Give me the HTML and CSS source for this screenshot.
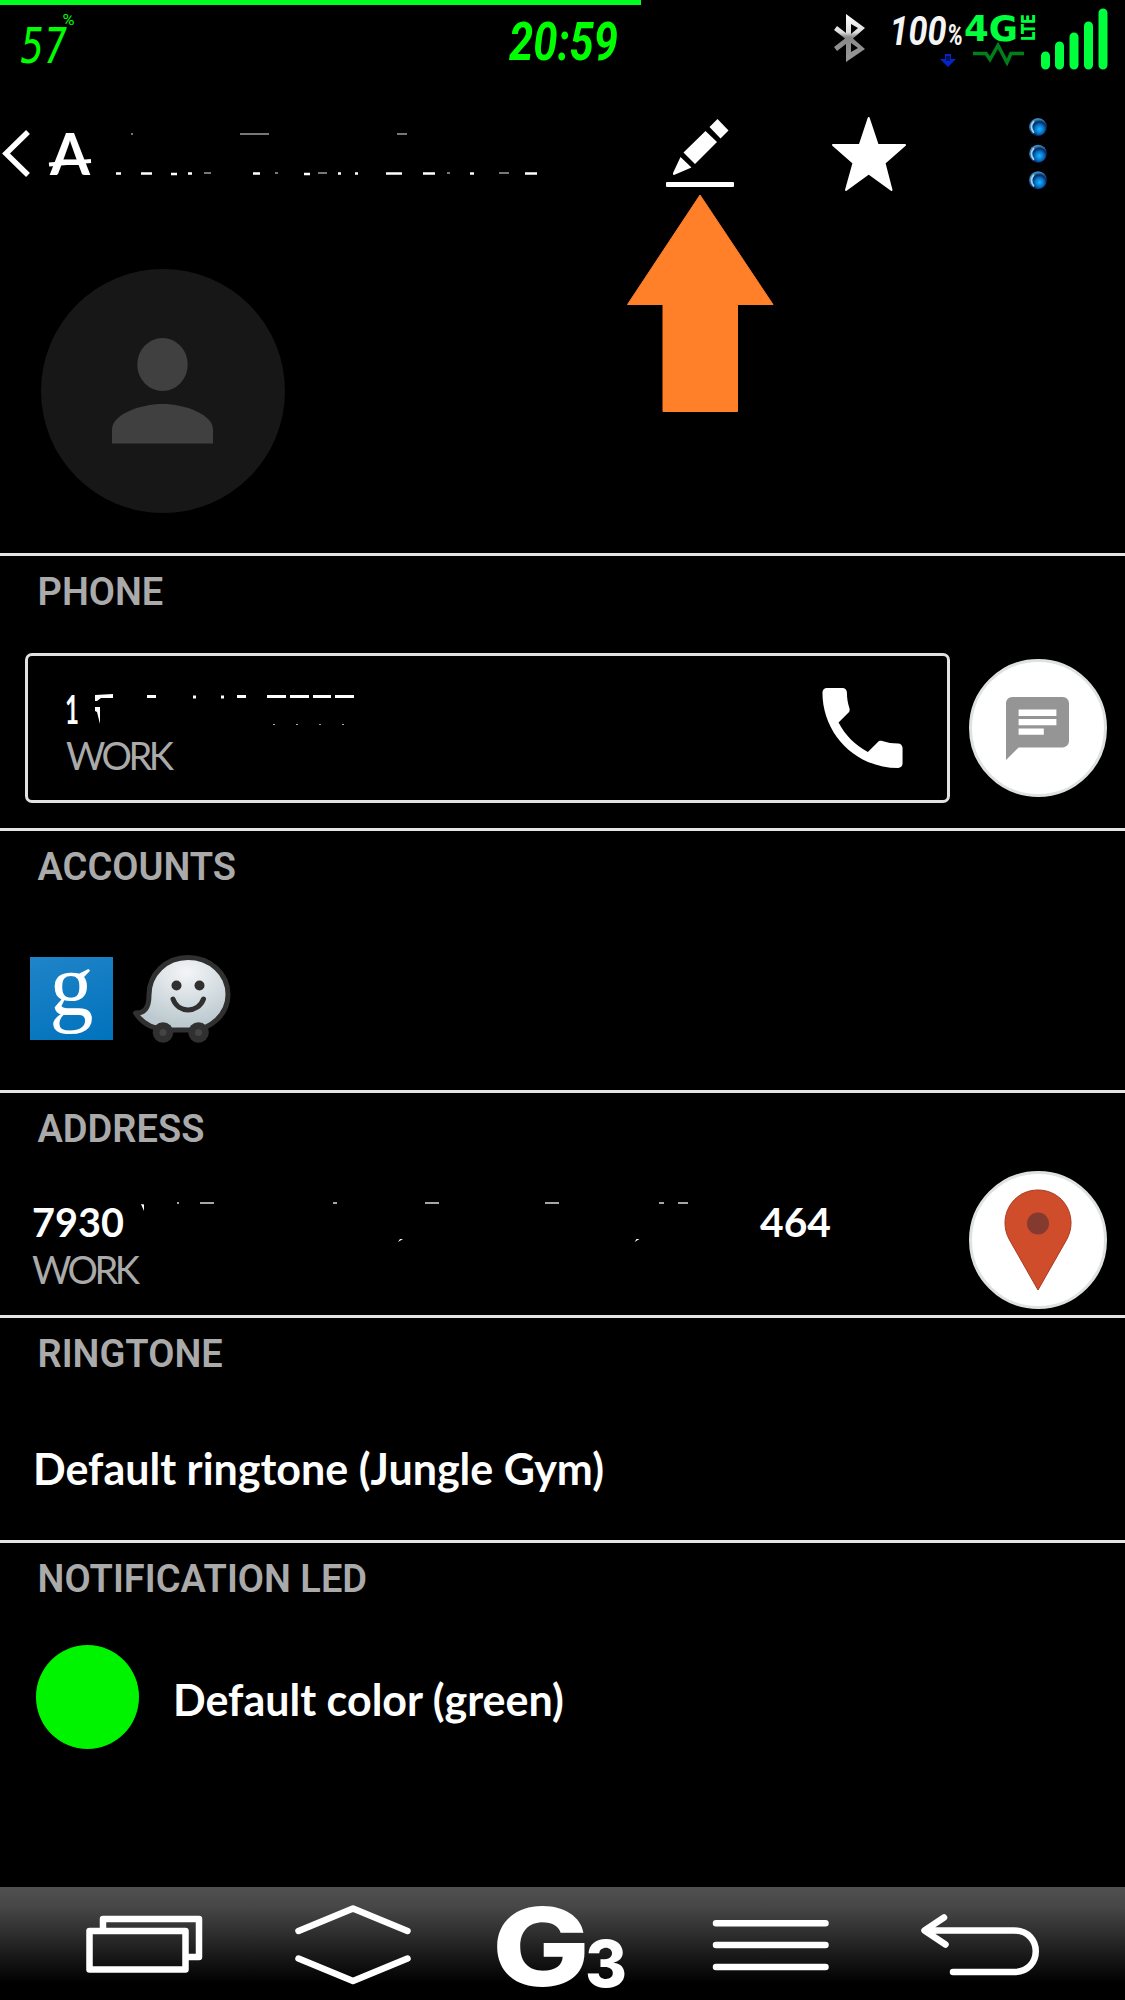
FILE: index.html
```
<!DOCTYPE html>
<html lang="en">
	<head>
		<meta charset="utf-8">
		<title>Contact</title>
		<meta name="viewport" content="width=device-width">
		<link rel="stylesheet" href="styles.css">
	</head>
	<body>
		<div class="phone">
			<div class="charge"></div>

			<header class="status">
				<svg class="battery" width="56" height="52" viewBox="20 13 56 52">
					<text class="digits" x="21" y="62.500" textLength="46" lengthAdjust="spacingAndGlyphs">57</text>
					<text class="digits-pct" x="62.500" y="25" textLength="12" lengthAdjust="spacingAndGlyphs">%</text>
				</svg>
				<svg class="clock" width="118" height="52" viewBox="504 13 118 52">
					<text x="509" y="59.500" textLength="109" lengthAdjust="spacingAndGlyphs">20:59</text>
				</svg>
				<svg class="bluetooth" width="32" height="50" viewBox="834 13 32 50">
					<defs>
						<linearGradient id="bt" x1="0" y1="0" x2="0" y2="1">
							<stop offset="0" stop-color="#fff"/>
							<stop offset=".38" stop-color="#ddd"/>
							<stop offset=".48" stop-color="#888"/>
							<stop offset="1" stop-color="#999"/>
						</linearGradient>
					</defs>
					<path fill="url(#bt)" fill-rule="evenodd" d="M846 14l19 14-12 10.500 12 10.500-19 13V44l-9 7-3-4 11-8.500L834 30l3-4 9 7zM851 24v10l7-6zM851 43v9l7-4z"/>
				</svg>
				<svg class="level" width="72" height="56" viewBox="891 13 72 56">
					<text x="889.500" y="45" textLength="57" lengthAdjust="spacingAndGlyphs">100</text>
					<text class="level-pct" x="947" y="45" textLength="16" lengthAdjust="spacingAndGlyphs">%</text>
					<path fill="#0026c8" d="M945 54h6v5h5l-8 8-8-8h5z"/>
					<path fill="#001060" d="M946 56h4v5h-4z"/>
				</svg>
				<svg class="network" width="74" height="54" viewBox="963 13 74 54">
					<text class="gen" x="964" y="41" textLength="54" lengthAdjust="spacingAndGlyphs">4G</text>
					<text class="lte" transform="translate(1034.500 41) rotate(-90)" textLength="27" lengthAdjust="spacingAndGlyphs">LTE</text>
					<path fill="none" stroke="#00801c" stroke-width="3.500" d="M973 53.500h13l4 6 8-14 9 17 4-9h13"/>
				</svg>
				<svg class="signal" width="66" height="64" viewBox="1040 7 66 64">
					<path stroke="#00ff3c" stroke-width="9" stroke-linecap="round" d="M1045.500 56v9M1059.500 46v19M1074 37v28M1088.500 26v39M1103 13v52"/>
				</svg>
			</header>

			<nav class="actionbar">
				<svg class="back" width="30" height="50" viewBox="2 128 30 50">
					<path fill="none" stroke="#fff" stroke-width="5.500" d="M28 132L6 153.500 28 175"/>
				</svg>
				<svg class="name" width="500" height="50" viewBox="46 128 500 50">
					<text x="50" y="174.500" textLength="40" lengthAdjust="spacingAndGlyphs">A</text>
					<path stroke="#fff" stroke-width="4" d="M49 164.500l42-3.500"/>
					<path stroke="#777" stroke-width="2" d="M131 134h2M240 134h29M397 134h10M204 173h7M275 173h3M318 173h9M447 173h3M499 173h10"/>
					<path stroke="#fff" stroke-width="2.500" d="M116 173.500h5M141 173.500h11M171 174h6M188 173.500h4M253 173.500h7M304 174h6M338 173.500h3M355 173.500h3M386 173.500h16M423 173.500h12M470 173.500h4M525 173.500h12"/>
				</svg>
				<div class="edit">
					<svg width="70" height="72" viewBox="665 117 70 72">
						<path fill="#fff" d="M717.500 119l11 11.500-8 8-11-11.500zM705.500 131l11.500 11-22 22-11.500-11.500zM680.500 157l11 10.500-17.500 7.500q-1.500 0-1-2z"/>
						<rect x="666" y="182" width="68" height="5" rx="1" fill="#fff"/>
					</svg>
					<svg class="pointer" width="147" height="220" viewBox="626.500 193 147 220">
						<path fill="#ff8028" stroke="#ff8028" stroke-width="1" stroke-linejoin="round" d="M699.500 195L772.500 304.500H737v107h-74.500v-107H627z"/>
					</svg>
				</div>
				<svg class="star" width="76" height="76" viewBox="831 115 76 76">
					<path fill="#fff" stroke="#fff" stroke-width="2" stroke-linejoin="round" d="M868.700 117l9 27H905l-20.500 18 7 27-22.800-16.500L846 189l7.500-27L833 144h26.700z"/>
				</svg>
				<svg class="more" width="20" height="76" viewBox="1028 115 20 76">
					<defs>
						<radialGradient id="bead" cx=".58" cy=".62" r=".55">
							<stop offset="0" stop-color="#18b8ff"/>
							<stop offset=".45" stop-color="#0870c8"/>
							<stop offset=".75" stop-color="#06285c"/>
							<stop offset="1" stop-color="#3c88c0"/>
						</radialGradient>
					</defs>
					<g fill="url(#bead)">
						<ellipse cx="1038" cy="126" rx="8.800" ry="9"/>
						<ellipse cx="1038" cy="152.700" rx="8.800" ry="9"/>
						<ellipse cx="1038" cy="179.200" rx="8.800" ry="9"/>
					</g>
					<path fill="none" stroke="#9cd8f4" stroke-width="1.800" stroke-linecap="round" d="M1033.500 120.700q-4 5 0 10.500M1033.500 147.700q-4 5 0 10.500M1033.500 174.200q-4 5 0 10.500"/>
				</svg>
			</nav>

			<div class="photo">
				<svg width="244" height="244" viewBox="0 0 244 244">
					<circle cx="122" cy="122" r="122" fill="#171717"/>
					<ellipse cx="121.500" cy="95.500" rx="25.200" ry="26.500" fill="#404040"/>
					<path fill="#404040" d="M71 174.500v-14c0-15 28-25.500 50.500-25.500S172 145.500 172 160.500v14z"/>
				</svg>
			</div>

			<section class="block block-phone">
				<h2>PHONE</h2>
				<div class="row row-phone">
					<div class="number">
						<div class="lines">
							<svg class="hidden-text" width="300" height="36" viewBox="66 692 300 36">
								<text x="65" y="724" textLength="14" lengthAdjust="spacingAndGlyphs">1</text>
								<path fill="#fff" d="M95 695l18-1v4h-12l-4 3h-2zM95 707h5v17l-3-12-2-1z"/>
								<path stroke="#fff" stroke-width="3" d="M147 696.500h9M193 697h3M221 697h3M237 696.500h9M267 696.500h19M290 696.500h19M313 696.500h18M335 696.500h19"/>
								<path stroke="#aaa" stroke-width="1" d="M273 724.500h2M296 724.500h2M319 724.500h2M342 724.500h2"/>
							</svg>
							<span class="kind">WORK</span>
						</div>
						<svg class="call" width="81" height="82" viewBox="2.900 2.900 18.200 18.200">
							<path fill="#fff" d="M6.620 10.790c1.440 2.830 3.760 5.140 6.590 6.590l2.200-2.200c.27-.27.67-.36 1.020-.24 1.120.37 2.330.57 3.570.57.550 0 1 .45 1 1V20c0 .55-.45 1-1 1-9.390 0-17-7.610-17-17 0-.55.450-1 1-1h3.500c.55 0 1 .45 1 1 0 1.250.2 2.450.570 3.570.110.350.030.740-.250 1.020l-2.200 2.200z"/>
						</svg>
					</div>
					<div class="round">
						<svg width="63" height="63" viewBox="2 2 20 20">
							<path fill="#959595" d="M20 2H4c-1.100 0-1.990.9-1.990 2L2 22l4-4h14c1.100 0 2-.9 2-2V4c0-1.100-.9-2-2-2zM6 9h12v2H6V9zm8 5H6v-2h8v2zm4-6H6V6h12v2z"/>
						</svg>
					</div>
				</div>
			</section>

			<section class="block block-accounts">
				<h2>ACCOUNTS</h2>
				<div class="row row-accounts">
					<div class="google"><span>g</span></div>
					<svg class="waze" width="100" height="90" viewBox="132 952 100 90">
						<defs>
							<radialGradient id="face" cx=".55" cy=".2" r=".9">
								<stop offset="0" stop-color="#f4f5f7"/>
								<stop offset=".8" stop-color="#bccad0"/>
							</radialGradient>
						</defs>
						<path fill="url(#face)" stroke="#303030" stroke-width="5" stroke-linejoin="round" d="M149 993c0-21 17-37.500 39-37.500s40 16 40 37c0 20-18 35.500-36 35.500h-23c-14-1-25-4-33.500-17 9 .5 13.500-5 13.500-18z"/>
						<circle cx="163" cy="1030.500" r="10.300" fill="#303030"/>
						<circle cx="198.500" cy="1030.500" r="10.300" fill="#303030"/>
						<circle cx="163" cy="1030.500" r="3.500" fill="#444"/>
						<circle cx="198.500" cy="1030.500" r="3.500" fill="#444"/>
						<circle cx="176.500" cy="983.500" r="5" fill="#303030"/>
						<circle cx="199.500" cy="983.500" r="5" fill="#303030"/>
						<path fill="none" stroke="#303030" stroke-width="5" stroke-linecap="round" d="M173 997c5 14.500 25 14.500 30.500 0"/>
					</svg>
				</div>
			</section>

			<section class="block block-address">
				<h2>ADDRESS</h2>
				<div class="row row-address">
					<div class="lines">
						<svg class="hidden-text" width="810" height="44" viewBox="30 1200 810 44">
							<text x="32" y="1237" textLength="92" lengthAdjust="spacingAndGlyphs">7930</text>
							<text x="760" y="1236.500" textLength="71" lengthAdjust="spacingAndGlyphs">464</text>
							<path fill="#fff" d="M141 1204l3 .5v6.500zM398 1242l2-3h3zM634.500 1242l2-3h3z"/>
							<path stroke="#ddd" stroke-width="1.700" d="M177 1203h2M200 1203h14M333 1203h4M425 1203h14M545 1203h14M659 1203h5M678 1203h10"/>
						</svg>
						<span class="kind">WORK</span>
					</div>
					<div class="round">
						<svg width="68" height="102" viewBox="1003.500 1189.500 68 102">
							<path fill="#cf4d2b" stroke="#a83a1e" stroke-width="1" d="M1037.500 1190.500c19 0 33 15 33 33 0 6-1.500 11-4 16l-29 51-29-51c-2.500-5-4-10-4-16 0-18 14-33 33-33z"/>
							<circle cx="1037.500" cy="1224" r="11" fill="#853a30"/>
						</svg>
					</div>
				</div>
			</section>

			<section class="block block-ringtone">
				<h2>RINGTONE</h2>
				<p class="value">Default ringtone (Jungle Gym)</p>
			</section>

			<section class="block block-led">
				<h2>NOTIFICATION LED</h2>
				<div class="row row-led">
					<i class="led"></i>
					<p class="value">Default color (green)</p>
				</div>
			</section>

			<footer class="softkeys">
				<svg width="118" height="60" viewBox="86 1915 118 60">
					<g fill="none" stroke="#fff" stroke-width="6.500" stroke-linejoin="round">
						<path d="M103 1929v-10h96v38h-11"/>
						<rect x="89.500" y="1931" width="96" height="38.500"/>
					</g>
				</svg>
				<svg width="118" height="82" viewBox="294 1904 118 82">
					<path fill="none" stroke="#fff" stroke-width="6.500" stroke-linecap="round" stroke-linejoin="round" d="M298.500 1931l54.500-22.500 54.500 22.500M298.500 1958.500L353 1981l54.500-22.500"/>
				</svg>
				<svg class="logo" width="130" height="86" viewBox="496 1904 130 86">
					<text class="logo-g" x="491" y="1987.500" textLength="98" lengthAdjust="spacingAndGlyphs">G</text>
					<text class="logo-3" x="584" y="1989" textLength="42" lengthAdjust="spacingAndGlyphs">3</text>
				</svg>
				<svg width="118" height="54" viewBox="711.500 1917 118 54">
					<path stroke="#fff" stroke-width="6.500" stroke-linecap="round" d="M715.500 1922.300h109.500M715.500 1944h109.500M715.500 1966h109.500"/>
				</svg>
				<svg width="120" height="66" viewBox="920 1912 120 66">
					<path fill="none" stroke="#fff" stroke-width="6.500" stroke-linecap="round" stroke-linejoin="round" d="M944 1917.500l-19.500 13 21 14M925 1930.500h89c29 0 29 41.500 0 41.500h-61"/>
				</svg>
			</footer>
		</div>
	</body>
</html>
```
FILE: styles.css
```
html, body {
	margin: 0;
	padding: 0;
	background-color: #000;
}

body {
	color: #fff;
	font-family: Roboto, "Liberation Sans", sans-serif;
}

svg {
	display: block;
	flex: none;
	overflow: visible;
}

.phone {
	display: flex;
	flex-direction: column;
	width: 1125px;
	height: 2000px;
	overflow: hidden;
}
.phone > * {
	box-sizing: border-box;
	flex: none;
}

.charge {
	width: 641px;
	height: 5px;
	background-color: #00ff20;
}

/* status bar */
.status {
	display: flex;
	align-items: flex-start;
	height: 85px;
	padding: 8px 19px 0 20px;
}
.clock {
	margin-left: 428px;
	margin-right: 212px;
}
.level {
	margin-left: 25px;
}
.signal {
	margin-left: 3px;
	margin-top: -6px;
}
.digits {
	fill: #00ff00;
	font: italic 50px "DejaVu Sans Mono", monospace;
}
.digits-pct {
	fill: #00ff00;
	font: 15px Roboto, sans-serif;
}
.clock text {
	fill: #00ff00;
	font: italic bold 53px Roboto, sans-serif;
}
.level text {
	fill: #f4f4f4;
	font: italic bold 41px Roboto, sans-serif;
}
.level .level-pct {
	font-size: 30px;
}
.gen,
.lte {
	fill: #00ff3c;
	font: bold 36px "DejaVu Sans", sans-serif;
}
.lte {
	font-size: 19px;
}

/* action bar */
.actionbar {
	display: flex;
	align-items: center;
	height: 126px;
	padding: 2px 0 0 2px;
}
.back {
	margin-top: -2px;
}
.name {
	margin: -2px 0 0 14px;
}
.name text {
	fill: #fff;
	font: bold 57px Lato, sans-serif;
}
.edit {
	position: relative;
	margin: -2px 0 0 119px;
}
.pointer {
	position: absolute;
	top: 76px;
	left: -38.500px;
}
.star {
	margin-left: 96px;
}
.more {
	margin-left: 121px;
}

.photo {
	height: 337px;
	padding: 53px 0 0 40.500px;
}

/* contact blocks */
.block {
	border-top: 3px solid #e4e4e4;
}
.block h2 {
	margin: 0;
	padding: 14px 0 0 37.500px;
	color: #aaa;
	font-size: 38px;
	font-weight: 600;
	line-height: 45px;
}
.block-phone {
	height: 275px;
}
.block-accounts {
	height: 262px;
}
.block-address {
	height: 225px;
}
.block-ringtone {
	height: 225px;
}
.block-led {
	height: 347px;
}
.row {
	display: flex;
	align-items: center;
}
.row-phone {
	margin-top: 38px;
	padding-left: 25px;
}
.number {
	box-sizing: border-box;
	display: flex;
	align-items: center;
	justify-content: space-between;
	width: 925px;
	height: 150px;
	padding: 0 44px 0 38px;
	border: 3px solid #e2e2e2;
	border-radius: 7px;
}
.lines {
	display: flex;
	flex-direction: column;
	padding-top: 10px;
}
.hidden-text text {
	fill: #fff;
	font: bold 41px Lato, sans-serif;
}
.kind {
	margin-top: 7px;
	color: #aaa;
	font-family: Lato, sans-serif;
	font-size: 38px;
	line-height: 40px;
	letter-spacing: -3.500px;
}
.round {
	box-sizing: border-box;
	display: flex;
	align-items: center;
	justify-content: center;
	width: 138px;
	height: 138px;
	margin-left: 18.500px;
	border: 3px solid #dfe2e2;
	border-radius: 50%;
	background-color: #fff;
}
.row-accounts {
	margin-top: 62px;
	padding-left: 30px;
}
.google {
	width: 83px;
	height: 83px;
	background: linear-gradient(160deg, #2084c8, #0072bc);
	text-align: center;
}
.google span {
	display: block;
	font: 88px/57px "Liberation Serif", serif;
}
.waze {
	margin-left: 19px;
	margin-top: 2px;
}
.row-address {
	margin-top: 19px;
	padding-left: 30px;
}
.row-address .lines {
	width: 920px;
	padding-top: 8px;
}
.row-address .kind {
	margin: 5px 0 0 2px;
}
.value {
	margin: 0;
	font-family: Lato, sans-serif;
	font-size: 43px;
	font-weight: bold;
	line-height: 56px;
	white-space: nowrap;
}
.block-ringtone .value {
	margin: 64px 0 0 33px;
}
.row-led {
	margin-top: 43px;
	padding-left: 36px;
}
.row-led .value {
	margin-left: 34px;
	padding-top: 6px;
}
.led {
	width: 103px;
	height: 104px;
	border-radius: 50%;
	background-color: #00f400;
}

/* soft keys */
.softkeys {
	display: flex;
	align-items: center;
	justify-content: space-between;
	height: 113px;
	padding: 2px 85px 0 86px;
	background: linear-gradient(#505050, #464646 18%, #000 85%);
}
.logo {
	margin: 0 -5px;
}
.logo text {
	fill: #fff;
	font: 800 108px Inter, sans-serif;
}
.logo .logo-3 {
	font-size: 64px;
}
```
